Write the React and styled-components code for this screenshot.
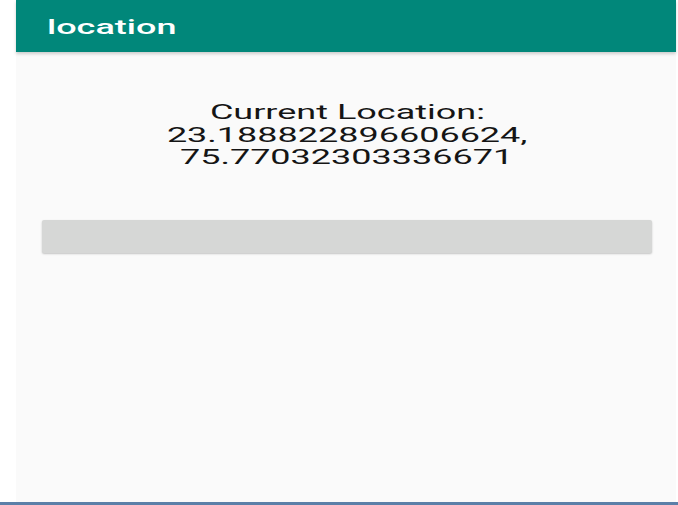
import React from 'react';
import styled, { createGlobalStyle } from 'styled-components';

// the capture is stretched sideways, so text gets a horizontal scale
const STRETCH = 1.8;

const GlobalStyle = createGlobalStyle`
  html, body {
    margin: 0;
    padding: 0;
    background: #ffffff;
    font-family: Roboto, "Liberation Sans", sans-serif;
  }
`;

const Frame = styled.div`
  display: flex;
  height: 502px;
  padding: 0 2px 0 16px;
  border-bottom: 3px solid #5b7fa8;
`;

const Screen = styled.div`
  flex: 1;
  display: flex;
  flex-direction: column;
  background: #fafafa;
`;

const AppBar = styled.header`
  height: 52px;
  box-sizing: border-box;
  display: flex;
  align-items: center;
  padding: 2px 0 0 31px;
  background: #01877a;
  box-shadow: 0 2px 3px rgba(0, 0, 0, 0.18);
`;

const Stretched = styled.span`
  display: block;
  transform: scaleX(${STRETCH});
  transform-origin: ${(p) => (p.$origin ? p.$origin : 'center')};
  white-space: nowrap;
`;

const Title = styled(Stretched)`
  color: #ffffff;
  font-size: 20px;
  font-weight: 500;
`;

const Body = styled.main`
  display: flex;
  flex-direction: column;
  align-items: stretch;
  padding: 49px 24px 0 26px;
`;

const Location = styled.div`
  display: flex;
  flex-direction: column;
  align-items: center;
  color: #151515;
  font-size: 20px;
  line-height: 22.5px;
`;

const Button = styled.button`
  margin-top: 51px;
  height: 33px;
  border: none;
  border-radius: 2px;
  background: #d6d7d6;
  box-shadow: 0 1px 2px rgba(0, 0, 0, 0.22);
  cursor: pointer;
`;

const App = () => {
  const lat = '23.188822896606624';
  const lng = '75.77032303336671';

  return (
    <>
      <GlobalStyle />
      <Frame>
        <Screen>
          <AppBar>
            <Title $origin="left">location</Title>
          </AppBar>
          <Body>
            <Location>
              <Stretched>Current Location:</Stretched>
              <Stretched>{lat},</Stretched>
              <Stretched>{lng}</Stretched>
            </Location>
            <Button />
          </Body>
        </Screen>
      </Frame>
    </>
  );
};

export default App;
